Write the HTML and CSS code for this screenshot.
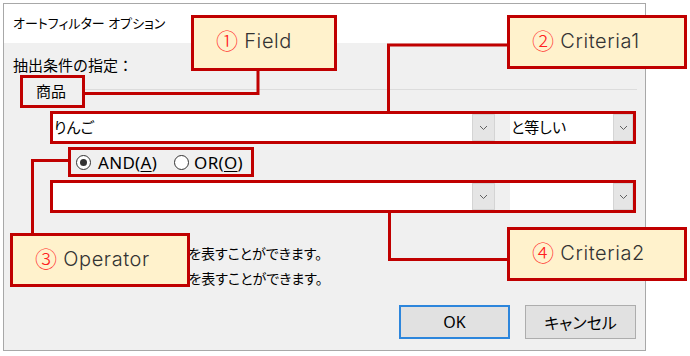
FILE: index.html
```html
<!DOCTYPE html>
<html lang="ja">
<head>
    <meta charset="UTF-8">
    <meta name="viewport" content="width=device-width, initial-scale=1.0">
    <title>オートフィルター オプション</title>
    <link rel="stylesheet" href="styles.css">
</head>
<body>
    <div class="dialog">
        <div class="title-bar">オートフィルター オプション</div>
        <div class="dialog-body">
            <p class="caption">抽出条件の指定：</p>
            <div class="group-head">
                <span class="group-label mark">商品</span>
                <span class="group-line"></span>
            </div>

            <div class="criteria-row mark">
                <div class="combo combo-value">
                    <span class="combo-text">りんご</span>
                    <span class="combo-btn"><svg width="9" height="6" viewBox="0 0 9 6"><polyline points="1,1 4.5,4.5 8,1"/></svg></span>
                </div>
                <div class="combo combo-op">
                    <span class="combo-text">と等しい</span>
                    <span class="combo-btn"><svg width="9" height="6" viewBox="0 0 9 6"><polyline points="1,1 4.5,4.5 8,1"/></svg></span>
                </div>
            </div>

            <div class="radio-group mark">
                <label class="radio checked"><span class="radio-dot"></span><span>AND(<u>A</u>)</span></label>
                <label class="radio"><span class="radio-dot"></span><span>OR(<u>O</u>)</span></label>
            </div>

            <div class="criteria-row mark">
                <div class="combo combo-value">
                    <span class="combo-text"></span>
                    <span class="combo-btn"><svg width="9" height="6" viewBox="0 0 9 6"><polyline points="1,1 4.5,4.5 8,1"/></svg></span>
                </div>
                <div class="combo combo-op">
                    <span class="combo-text"></span>
                    <span class="combo-btn"><svg width="9" height="6" viewBox="0 0 9 6"><polyline points="1,1 4.5,4.5 8,1"/></svg></span>
                </div>
            </div>

            <p class="hint">? を使って、任意の 1 文字を表すことができます。<br>* を使って、任意の文字列を表すことができます。</p>

            <div class="buttons">
                <button class="btn btn-default">OK</button>
                <button class="btn">キャンセル</button>
            </div>
        </div>
    </div>

    <!-- annotation layer -->
    <svg class="leaders" width="690" height="356" viewBox="0 0 690 356">
        <polyline points="258,70 258,93.5 84,93.5"/>
        <polyline points="507,45 388.5,45 388.5,111"/>
        <polyline points="32.5,234 32.5,160.5 69,160.5"/>
        <polyline points="389.5,211 389.5,259.5 508,259.5"/>
    </svg>
    <div class="callout callout-field"><span class="num">①</span> Field</div>
    <div class="callout callout-c1"><span class="num">②</span> Criteria1</div>
    <div class="callout callout-op"><span class="num">③</span> Operator</div>
    <div class="callout callout-c2"><span class="num">④</span> Criteria2</div>
</body>
</html>
```

FILE: styles.css
```css
body {
    margin: 0;
    width: 690px;
    height: 356px;
    overflow: hidden;
    position: relative;
    background-color: #ffffff;
    font-family: "Noto Sans", "Noto Sans CJK JP", sans-serif;
    color: #000000;
}

/* dialog */

.dialog {
    margin: 3px 0 0 3px;
    width: 643px;
    height: 348px;
    box-sizing: border-box;
    border: 1px solid #a8a8a8;
    display: flex;
    flex-direction: column;
}

.title-bar {
    height: 39px;
    line-height: 39px;
    padding-left: 9px;
    background-color: #ffffff;
    font-size: 13px;
    font-feature-settings: "palt";
}

.dialog-body {
    flex: 1;
    display: flex;
    flex-direction: column;
    background-color: #f0f0f0;
    font-size: 15px;
}

.caption {
    margin: 12px 0 0 9px;
    line-height: 20px;
}

.group-head {
    display: flex;
    margin: 0 8px 0 16px;
}

.group-label {
    width: 65px;
    height: 33px;
    box-sizing: border-box;
    padding-left: 13px;
    line-height: 27px;
}

.group-line {
    flex: 1;
    height: 1px;
    margin-top: 14px;
    background-color: #dcdcdc;
}

/* red highlight of the annotated parts */
.mark {
    border: 3px solid #c00000;
}

.criteria-row {
    display: flex;
    gap: 15px;
    height: 33px;
    box-sizing: border-box;
    margin: 3px 9px 0 46px;
}

.criteria-row:first-of-type {
    margin-top: 2px;
}

.combo {
    display: flex;
    background-color: #ffffff;
}

.combo-value {
    width: 442px;
}

.combo-op {
    flex: 1;
}

.combo-text {
    flex: 1;
    padding-left: 1px;
    line-height: 27px;
    white-space: nowrap;
    overflow: hidden;
    font-feature-settings: "palt";
}

.combo-btn {
    width: 23px;
    box-sizing: border-box;
    border: 1px solid #d4d4d4;
    background-color: #e5e5e5;
    display: flex;
    align-items: center;
    justify-content: center;
}

.combo-op .combo-btn {
    width: 20px;
}

.combo-btn svg polyline {
    fill: none;
    stroke: #606060;
    stroke-width: 1;
}

.radio-group {
    display: flex;
    align-items: center;
    width: 186px;
    height: 30px;
    box-sizing: border-box;
    margin: 3px 0 0 64px;
    padding-left: 5px;
}

.radio {
    display: flex;
    align-items: center;
    gap: 7px;
    font-size: 17px;
    letter-spacing: 0.3px;
}

.radio + .radio {
    margin-left: 17px;
    gap: 5px;
}

.radio u {
    text-underline-offset: 2px;
}

.radio-dot {
    width: 15px;
    height: 15px;
    box-sizing: border-box;
    border: 1px solid #333333;
    border-radius: 50%;
    background-color: #ffffff;
    display: flex;
    align-items: center;
    justify-content: center;
}

.radio.checked .radio-dot::after {
    content: "";
    width: 7px;
    height: 7px;
    border-radius: 50%;
    background-color: #333333;
}

.hint {
    margin: 28px 0 0 33px;
    font-size: 14px;
    line-height: 25px;
    white-space: nowrap;
    font-feature-settings: "palt";
}

.buttons {
    margin-top: auto;
    display: flex;
    justify-content: flex-end;
    gap: 15px;
    padding: 0 9px 11px 0;
}

.btn {
    width: 111px;
    height: 34px;
    border: 1px solid #adadad;
    background-color: #e1e1e1;
    font-family: "Noto Sans", "Noto Sans CJK JP", sans-serif;
    font-size: 16px;
    color: #000000;
    font-feature-settings: "palt";
}

.btn-default {
    border: 2px solid #2d86dc;
}

/* annotations */

.leaders {
    position: absolute;
    left: 0;
    top: 0;
}

.leaders polyline {
    fill: none;
    stroke: #c00000;
    stroke-width: 3;
}

.callout {
    position: absolute;
    box-sizing: border-box;
    width: 180px;
    height: 54px;
    border: 3px solid #c00000;
    background-color: #fff2cc;
    padding: 9px 0 0 22px;
    font-family: Inter, "Noto Sans CJK JP", sans-serif;
    font-size: 20px;
    font-weight: 300;
    letter-spacing: 0.6px;
    line-height: 24px;
    color: #333333;
    white-space: nowrap;
}

.callout .num {
    font-family: "Noto Sans CJK JP", sans-serif;
    font-size: 22px;
    font-weight: 300;
    letter-spacing: 0;
    vertical-align: -1px;
    color: #ff2020;
}

.callout-field {
    left: 191px;
    top: 15px;
    width: 146px;
    height: 56px;
}

.callout-c1 {
    left: 507px;
    top: 15px;
}

.callout-op {
    left: 10px;
    top: 233px;
}

.callout-c2 {
    left: 507px;
    top: 227px;
}
```
